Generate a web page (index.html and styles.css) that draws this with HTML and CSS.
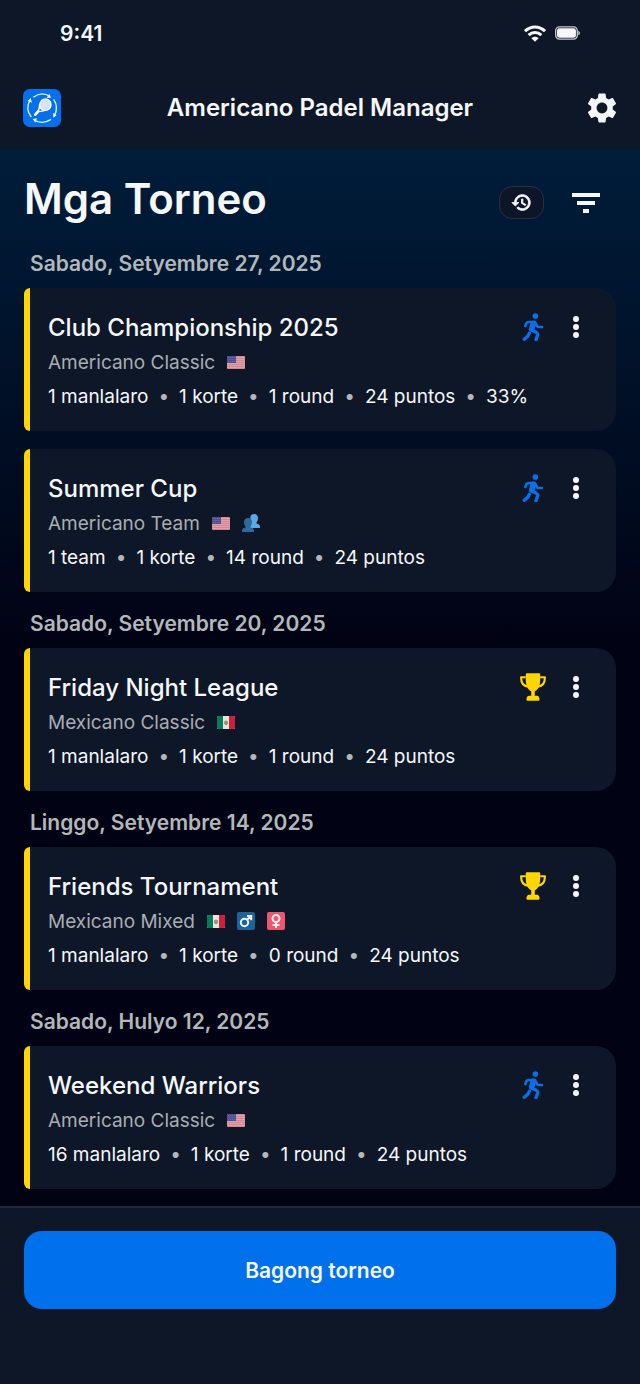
FILE: index.html
```html
<!DOCTYPE html>
<html lang="fil">
  <head>
    <meta charset="UTF-8" />
    <meta name="viewport" content="width=device-width, initial-scale=1.0" />
    <title>Americano Padel Manager</title>
    <link rel="stylesheet" href="styles.css">
  </head>
  <body>
    <!-- Shared icons -->
    <svg class="sprite" aria-hidden="true">
      <symbol id="icon-run" viewBox="0 0 64 84">
        <circle cx="39" cy="9" r="8.5" />
        <g fill="none" stroke="currentColor" stroke-linecap="round" stroke-linejoin="round">
          <path d="M9 39L12 31Q14 27 19 27H33" stroke-width="8" />
          <path d="M33 31L28 48" stroke-width="17" />
          <path d="M38 28L44 39Q46 42 49 42H59" stroke-width="8" />
          <path d="M29 52L42 58Q47 61 46 65L41 80" stroke-width="10" />
          <path d="M21 61L17 69L6 79" stroke-width="10" />
        </g>
      </symbol>
      <symbol id="icon-trophy" viewBox="0 0 72 76">
        <path d="M16 3Q16 0 19 0H53Q56 0 56 3V8C57 32 52 44 41 50V62H48Q54 63 54 70V73Q54 76 51 76H21Q18 76 18 73V70Q18 63 24 62H31V50C20 44 15 32 16 8Z" />
        <path d="M16 11H3C3 26 9 36 23 37M56 11H69C69 26 63 36 49 37" fill="none" stroke="currentColor" stroke-width="6" stroke-linejoin="round" />
      </symbol>
      <symbol id="icon-more" viewBox="0 0 8 24">
        <circle cx="4" cy="4" r="3" />
        <circle cx="4" cy="12" r="3" />
        <circle cx="4" cy="20" r="3" />
      </symbol>
      <symbol id="flag-us" viewBox="0 0 18 13">
        <rect width="18" height="13" rx="1" fill="#d9848e" />
        <path d="M0 1.5H18M0 3.5H18M0 5.5H18M0 7.5H18M0 9.5H18M0 11.5H18" stroke="#d8a4ae" stroke-width="1" />
        <rect width="9" height="7" fill="#504f91" />
        <path d="M1 1.5H8M1.5 3.5H8M1 5.5H8" stroke="#716fa6" stroke-width="1" stroke-dasharray="1 1" />
      </symbol>
      <symbol id="flag-mx" viewBox="0 0 18 13">
        <rect width="18" height="13" rx="1.5" fill="#e4e4e0" />
        <path d="M1.5 0H6V13H1.5Q0 13 0 11.5V1.5Q0 0 1.5 0Z" fill="#087a55" />
        <path d="M12 0H16.5Q18 0 18 1.5V11.5Q18 13 16.5 13H12Z" fill="#ce2039" />
        <circle cx="9" cy="6.5" r="2" fill="#a98c6b" />
        <path d="M7 7Q9 10.5 11 7" fill="none" stroke="#7f9c63" />
      </symbol>
      <symbol id="icon-team" viewBox="0 0 18 18">
        <path d="M12 0C14.6 0 16 1.7 16 4.2C16 6.2 15.3 7.3 14.5 8.2V9.5C16.5 10.2 18 10.5 18 13V14H8L8.5 2Q9.6 0 12 0Z" fill="#5ca9e8" />
        <path d="M6 4C8.700 4 10 5.700 10 8.200C10 10.200 9.300 11.300 8.500 12.200V13.500C10.600 14.200 12 14.500 12 17V18H0V17C0 14.500 1.500 14.200 3.500 13.500V12.200C2.700 11.300 2 10.200 2 8.200C2 5.700 3.400 4 6 4Z" fill="#2b6ba0" />
      </symbol>
      <symbol id="icon-male" viewBox="0 0 18 18">
        <rect width="18" height="18" rx="2" fill="#1f639b" />
        <g fill="none" stroke="#eef4fa" stroke-width="2">
          <circle cx="7.5" cy="10.5" r="3.7" />
          <path d="M10.200 7.800L14 4M10 4H14.200V8.200" />
        </g>
      </symbol>
      <symbol id="icon-female" viewBox="0 0 18 18">
        <rect width="18" height="18" rx="2" fill="#ee5670" />
        <g fill="none" stroke="#fdf0f2" stroke-width="2">
          <circle cx="9" cy="6.5" r="3.5" />
          <path d="M9 10V16M5.500 13H12.500" />
        </g>
      </symbol>
    </svg>

    <header class="header">
      <div class="status-bar">
        <span class="time">9:41</span>
        <div class="status-icons">
          <svg class="wifi" viewBox="0 0 66 50">
            <g fill="none" stroke="currentColor" stroke-width="9">
              <path d="M3 18C20 1 46 1 63 18" />
              <path d="M14 30C25 19 41 19 52 30" />
            </g>
            <path d="M33 50L22 39C28 33 38 33 44 39Z" />
          </svg>
          <svg class="battery" viewBox="0 0 74 40">
            <rect x="2" y="2" width="64" height="36" rx="11" fill="none" stroke="#c3c6cb" stroke-width="4" />
            <rect x="6" y="6" width="56" height="28" rx="7" />
            <path d="M69 13Q74 15 74 20T69 27Z" fill="#c3c6cb" />
          </svg>
        </div>
      </div>
      <div class="app-bar">
        <svg class="logo" viewBox="0 0 114 114" role="img" aria-label="Logo">
          <rect width="114" height="114" rx="20" fill="#0470ec" />
          <path d="M31 25Q56 6 80 22M92 31Q108 55 94 80M84 91Q58 108 34 93M25 84Q6 60 21 33" fill="none" stroke="#e6f1ff" stroke-width="4" />
          <path d="M84 26L71 27L79 14ZM91 86L90 72L101 79ZM29 90L42 88L37 101ZM23 27L27 41L14 36Z" fill="#e6f1ff" />
          <path d="M37 77L50 62" stroke="#fff" stroke-width="8" stroke-linecap="round" />
          <path d="M45 67L48 46Q52 28 68 28Q86 31 86 48Q84 66 64 67L50 70Z" fill="#fff" />
          <ellipse cx="67" cy="47" rx="15" ry="16" fill="#d6e4f6" />
          <path d="M50 58L57 65L49 66Z" fill="#0470ec" />
        </svg>
        <h1>Americano Padel Manager</h1>
        <button class="icon-btn settings" aria-label="Settings">
          <svg viewBox="0 0 24 24">
            <path d="M19.140 12.940c.04-.3.06-.61.06-.94 0-.32-.02-.64-.07-.94l2.030-1.580c.18-.14.23-.41.12-.61l-1.920-3.320c-.12-.22-.37-.29-.59-.22l-2.390.96c-.5-.38-1.030-.7-1.620-.94l-.36-2.540c-.04-.24-.24-.41-.48-.41h-3.840c-.24 0-.43.17-.47.41l-.36 2.540c-.59.24-1.130.57-1.620.94l-2.390-.96c-.22-.08-.47 0-.59.22L2.740 8.870c-.12.21-.08.47.12.61l2.030 1.580c-.05.3-.09.63-.09.94s.02.64.07.94l-2.030 1.580c-.18.14-.23.41-.12.61l1.920 3.320c.12.22.37.29.59.22l2.390-.96c.5.38 1.030.7 1.620.94l.36 2.540c.05.24.24.41.48.41h3.840c.24 0 .44-.17.47-.41l.36-2.540c.59-.24 1.130-.56 1.620-.94l2.390.96c.22.08.47 0 .59-.22l1.920-3.320c.12-.22.07-.47-.12-.61l-2.010-1.580zM12 15.600c-1.980 0-3.600-1.620-3.600-3.600s1.620-3.600 3.600-3.600 3.600 1.620 3.600 3.600-1.620 3.600-3.600 3.600z" />
          </svg>
        </button>
      </div>
    </header>

    <main class="content">
      <div class="page-head">
        <h2>Mga Torneo</h2>
        <button class="history-btn" aria-label="History">
          <svg viewBox="0 0 24 24">
            <path d="M13 3c-4.970 0-9 4.030-9 9H1l3.890 3.890.07.14L9 12H6c0-3.870 3.130-7 7-7s7 3.130 7 7-3.130 7-7 7c-1.930 0-3.680-.79-4.940-2.060l-1.420 1.420C8.270 19.990 10.510 21 13 21c4.970 0 9-4.030 9-9s-4.030-9-9-9zm-1 5v5l4.280 2.540.72-1.210-3.500-2.080V8H12z" />
          </svg>
        </button>
        <button class="icon-btn filter" aria-label="Filter">
          <svg viewBox="0 0 28 20">
            <path d="M0 0H28V4H0ZM5 8H23V12H5ZM11 16H17V20H11Z" />
          </svg>
        </button>
      </div>

      <h3 class="date">Sabado, Setyembre 27, 2025</h3>
      <article class="card">
        <div class="card-head">
          <h4>Club Championship 2025</h4>
          <svg class="state running"><use href="#icon-run" /></svg>
          <button class="more" aria-label="More"><svg><use href="#icon-more" /></svg></button>
        </div>
        <div class="type">
          <span>Americano Classic</span>
          <svg class="flag"><use href="#flag-us" /></svg>
        </div>
        <div class="meta">
          <span>1 manlalaro</span><i>•</i><span>1 korte</span><i>•</i><span>1 round</span><i>•</i><span>24 puntos</span><i>•</i><span>33%</span>
        </div>
      </article>
      <article class="card">
        <div class="card-head">
          <h4>Summer Cup</h4>
          <svg class="state running"><use href="#icon-run" /></svg>
          <button class="more" aria-label="More"><svg><use href="#icon-more" /></svg></button>
        </div>
        <div class="type">
          <span>Americano Team</span>
          <svg class="flag"><use href="#flag-us" /></svg>
          <svg class="tag"><use href="#icon-team" /></svg>
        </div>
        <div class="meta">
          <span>1 team</span><i>•</i><span>1 korte</span><i>•</i><span>14 round</span><i>•</i><span>24 puntos</span>
        </div>
      </article>

      <h3 class="date">Sabado, Setyembre 20, 2025</h3>
      <article class="card">
        <div class="card-head">
          <h4>Friday Night League</h4>
          <svg class="state finished"><use href="#icon-trophy" /></svg>
          <button class="more" aria-label="More"><svg><use href="#icon-more" /></svg></button>
        </div>
        <div class="type">
          <span>Mexicano Classic</span>
          <svg class="flag"><use href="#flag-mx" /></svg>
        </div>
        <div class="meta">
          <span>1 manlalaro</span><i>•</i><span>1 korte</span><i>•</i><span>1 round</span><i>•</i><span>24 puntos</span>
        </div>
      </article>

      <h3 class="date">Linggo, Setyembre 14, 2025</h3>
      <article class="card">
        <div class="card-head">
          <h4>Friends Tournament</h4>
          <svg class="state finished"><use href="#icon-trophy" /></svg>
          <button class="more" aria-label="More"><svg><use href="#icon-more" /></svg></button>
        </div>
        <div class="type">
          <span>Mexicano Mixed</span>
          <svg class="flag"><use href="#flag-mx" /></svg>
          <svg class="tag"><use href="#icon-male" /></svg>
          <svg class="tag"><use href="#icon-female" /></svg>
        </div>
        <div class="meta">
          <span>1 manlalaro</span><i>•</i><span>1 korte</span><i>•</i><span>0 round</span><i>•</i><span>24 puntos</span>
        </div>
      </article>

      <h3 class="date">Sabado, Hulyo 12, 2025</h3>
      <article class="card">
        <div class="card-head">
          <h4>Weekend Warriors</h4>
          <svg class="state running"><use href="#icon-run" /></svg>
          <button class="more" aria-label="More"><svg><use href="#icon-more" /></svg></button>
        </div>
        <div class="type">
          <span>Americano Classic</span>
          <svg class="flag"><use href="#flag-us" /></svg>
        </div>
        <div class="meta">
          <span>16 manlalaro</span><i>•</i><span>1 korte</span><i>•</i><span>1 round</span><i>•</i><span>24 puntos</span>
        </div>
      </article>
    </main>

    <footer class="footer">
      <button class="new-btn">Bagong torneo</button>
    </footer>
  </body>
</html>
```
FILE: styles.css
```css
* {
    box-sizing: border-box;
}
body {
    margin: 0;
    min-height: 100vh;
    display: flex;
    flex-direction: column;
    font-family: Inter, "Liberation Sans", sans-serif;
    background-color: #010314;
    color: #f5f7fa;
}
h1, h2, h3, h4 {
    margin: 0;
}
button {
    padding: 0;
    border: none;
    background: none;
    color: inherit;
    font-family: inherit;
    cursor: pointer;
}
svg {
    display: block;
    flex: none;
    fill: currentColor;
}
.sprite {
    position: absolute;
    width: 0;
    height: 0;
}

/* Header */
.header {
    background-color: #0e1728;
}
.status-bar {
    display: flex;
    align-items: center;
    justify-content: space-between;
    height: 66px;
    padding: 0 60px;
}
.time {
    font-size: 21px;
    font-weight: 600;
}
.status-icons {
    display: flex;
    align-items: center;
    gap: 9px;
}
.wifi {
    width: 22px;
    height: 17px;
}
.battery {
    width: 25px;
    height: 14px;
}
.app-bar {
    display: grid;
    grid-template-columns: 1fr auto 1fr;
    align-items: center;
    height: 83px;
    padding: 0 20px;
}
.logo {
    width: 38px;
    height: 38px;
    margin-left: 3px;
}
.app-bar h1 {
    font-size: 24px;
    font-weight: 600;
}
.settings {
    justify-self: end;
}
.settings svg {
    width: 36px;
    height: 36px;
}

/* Tournament list */
.content {
    flex: 1;
    padding: 0 24px 17px;
    background: linear-gradient(#001d3a, #010314 490px);
}
.page-head {
    display: flex;
    align-items: center;
    height: 83px;
    padding-top: 24px;
}
.page-head h2 {
    flex: 1;
    padding-bottom: 8px;
    font-size: 42px;
    font-weight: 600;
}
.history-btn {
    display: flex;
    align-items: center;
    justify-content: center;
    width: 45px;
    height: 33px;
    border: 1px solid #2b3040;
    border-radius: 13px;
    background-color: #0e1528;
}
.history-btn svg {
    width: 21px;
    height: 21px;
    stroke: currentColor;
    stroke-width: 1px;
}
.filter {
    margin: 0 16px 0 28px;
}
.filter svg {
    width: 28px;
    height: 20px;
}
.date {
    padding: 16px 6px 8px;
    font-size: 21px;
    line-height: 32px;
    font-weight: 600;
    color: #b4b7ba;
}
.card {
    padding: 21px 25px 18px 18px;
    border-left: 6px solid #ffd600;
    border-radius: 6px 20px 20px 6px;
    background-color: #0e1728;
}
.card + .card {
    margin-top: 18px;
}
.card-head {
    display: flex;
    align-items: center;
    height: 36px;
}
.card-head h4 {
    flex: 1;
    font-size: 24px;
    font-weight: 500;
}
.state {
    width: 26px;
    height: 28px;
    margin-right: 15px;
}
.running {
    color: #0a70e8;
}
.finished {
    color: #ffd600;
}
.more {
    display: flex;
    justify-content: center;
    width: 30px;
}
.more svg {
    width: 8px;
    height: 24px;
}
.type {
    display: flex;
    align-items: center;
    gap: 12px;
    height: 34px;
    font-size: 19px;
    color: #a9adb4;
}
.flag {
    width: 18px;
    height: 13px;
}
.tag {
    width: 18px;
    height: 18px;
}
.meta {
    display: flex;
    align-items: center;
    gap: 10px;
    height: 34px;
    font-size: 19px;
}
.meta i {
    font-style: normal;
    color: #b4b7ba;
}

/* Bottom bar */
.footer {
    min-height: 178px;
    padding: 23px 24px;
    border-top: 2px solid #232838;
    background-color: #0e1728;
}
.new-btn {
    width: 100%;
    height: 78px;
    border-radius: 18px;
    background-color: #0070ec;
    font-size: 21px;
    font-weight: 600;
}
```
